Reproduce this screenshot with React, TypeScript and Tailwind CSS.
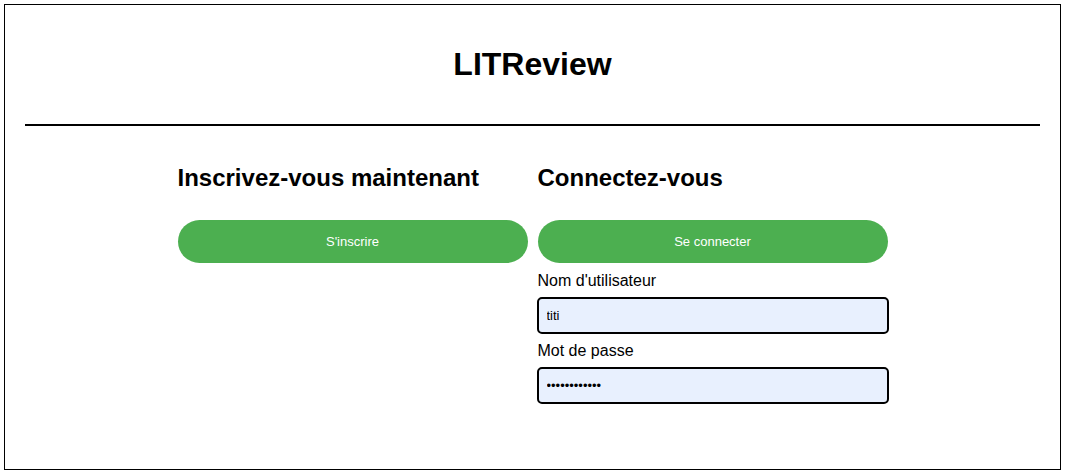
export default function App() {
  return (
    <div className="font-['Liberation_Sans',Arial,sans-serif] text-black bg-white">
      <div className="m-1 h-[466px] border border-black px-5 pt-[41px]">
        <h1 className="text-center text-[32px] leading-[37px] font-bold">LITReview</h1>
        <div className="mt-[41px] h-[2px] bg-black" />
        <div className="mt-[38px] flex justify-center gap-[10px]">
          <div className="w-[350px] flex flex-col">
            <h2 className="text-[24px] leading-[28px] font-bold">Inscrivez-vous maintenant</h2>
            <button className="mt-[28px] h-[43px] w-full rounded-full bg-[#4caf50] text-[13px] text-white">
              S'inscrire
            </button>
          </div>
          <div className="w-[350px] flex flex-col">
            <h2 className="text-[24px] leading-[28px] font-bold">Connectez-vous</h2>
            <button className="mt-[28px] h-[43px] w-full rounded-full bg-[#4caf50] text-[13px] text-white">
              Se connecter
            </button>
            <label className="mt-[9px] text-[16px] leading-[18px]">Nom d'utilisateur</label>
            <input
              type="text"
              defaultValue="titi"
              className="mt-[7px] -ml-px h-[37px] w-[352px] rounded-[5px] border-2 border-black bg-[#e8f0fe] px-[8px] text-[13px] outline-none"
            />
            <label className="mt-[8px] text-[16px] leading-[18px]">Mot de passe</label>
            <input
              type="password"
              defaultValue="titititititi"
              className="mt-[7px] -ml-px h-[37px] w-[352px] rounded-[5px] border-2 border-black bg-[#e8f0fe] px-[8px] text-[13px] outline-none"
            />
          </div>
        </div>
      </div>
    </div>
  );
}
